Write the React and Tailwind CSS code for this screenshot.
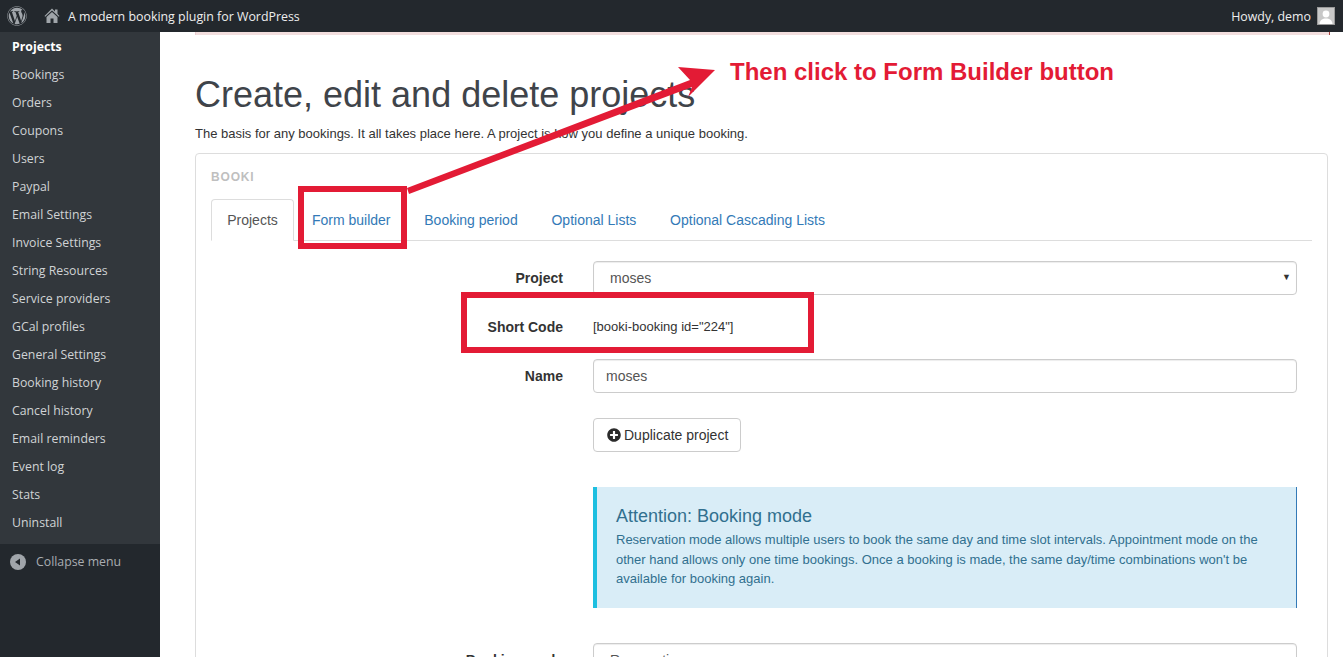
import React from "react";
import { FaWordpress, FaPlusCircle } from "react-icons/fa";

const menu = ["Projects","Bookings","Orders","Coupons","Users","Paypal","Email Settings","Invoice Settings","String Resources","Service providers","GCal profiles","General Settings","Booking history","Cancel history","Email reminders","Event log","Stats","Uninstall"];
const tabs = ["Form builder","Booking period","Optional Lists","Optional Cascading Lists"];

function Row({ label, children, className = "" }) {
  return (
    <div className={`flex ${className}`}>
      <div className="w-[382px] shrink-0 pr-[30px] text-right font-bold text-[14px] leading-[34px] text-[#333]">{label}</div>
      <div className="w-[704px] shrink-0">{children}</div>
    </div>
  );
}

export default function App() {
  return (
    <div className="relative w-[1343px] h-[657px] overflow-hidden bg-white font-['Liberation_Sans',Arial,sans-serif] text-[14px] text-[#333]">
      <header className="h-8 bg-[#23282d] flex items-center text-[#eee] font-['Open_Sans',sans-serif] text-[12.4px] leading-[20px]">
        <FaWordpress className="ml-[7px] w-[20px] h-[20px] text-[#a0a5aa]" />
        <svg viewBox="0 0 20 20" className="ml-[15px] w-[20px] h-[20px] text-[#a0a5aa]" fill="currentColor">
          <path d="M16 8.500 L17.500 10 L16.800 10.700 L10 4.500 L3.200 10.700 L2.500 10 L10 2.500 L13 5.500 V3.500 H15.500 V7.800 Z" />
          <path d="M4.500 11 L10 6 L15.500 11 V17 H11.500 V12.500 H8.500 V17 H4.500 Z" />
        </svg>
        <span className="ml-[6px] pt-[2px]">A modern booking plugin for WordPress</span>
        <span className="ml-auto mr-[6px] pt-[2px]">Howdy, demo</span>
        <div className="w-[18px] h-[18px] mr-[8px] bg-[#c8c8c8] border border-[#9a9a9a] overflow-hidden">
          <svg viewBox="0 0 16 16" className="w-full h-full"><circle cx="8" cy="6" r="3.4" fill="#fff"/><path d="M1.5 16c.4-4 3-5.5 6.5-5.5s6.100 1.500 6.500 5.500z" fill="#fff"/></svg>
        </div>
      </header>
      <div className="flex h-[625px]">
        <aside className="w-40 shrink-0 bg-[#23282d] font-['Open_Sans',sans-serif] text-[12.3px]">
          <nav className="bg-[#32373c] pb-2">
            {menu.map((m, i) => (
              <div key={m} className={`h-7 pl-3 leading-[30px] ${i === 0 ? "font-bold text-white" : "text-[#d0d3d5]"}`}>{m}</div>
            ))}
          </nav>
          <div className="flex items-center h-[36px] pl-[10px] text-[#a9adb1]">
            <svg viewBox="0 0 16 16" className="w-[16px] h-[16px]"><circle cx="8" cy="8" r="8" fill="#a0a5aa"/><path d="M10 4.500v7L5 8z" fill="#23282d"/></svg>
            <span className="ml-[10px]">Collapse menu</span>
          </div>
        </aside>
        <main className="flex-1 min-w-0 pl-[35px] pr-[15px]">
          <div className="h-[3px] w-[1135px] bg-[#f2dede] border-l border-r border-l-[#ebccd1] border-r-[#a94442]" />
          <h1 className="mt-[40px] text-[36px] leading-[40px] font-normal text-[#3f444a]">Create, edit and delete projects</h1>
          <p className="mt-[9px] text-[13px] leading-[20px] text-[#333]">The basis for any bookings. It all takes place here. A project is how you define a unique booking.</p>
          <section className="mt-[9px] w-[1133px] border border-[#ddd] rounded-[4px] pl-[15px] pr-[15px] pt-[16px] h-[600px]">
            <div className="text-[12px] leading-[14px] font-bold tracking-[0.07em] text-[#bfbfbf]">BOOKI</div>
            <div className="mt-[15px] flex h-[42px] border-b border-[#ddd] w-[1101px]">
              <div className="w-[83px] h-[42px] border border-[#ddd] border-b-white rounded-t-[4px] bg-white text-center leading-[41px] text-[#555]">Projects</div>
              {tabs.map((t) => (
                <div key={t} className="ml-[2px] px-[15.9px] leading-[42px] text-[#337ab7] whitespace-nowrap">{t}</div>
              ))}
            </div>
            <Row label="Project" className="mt-[20px]">
              <div className="h-[34px] border border-[#ccc] rounded-[4px] flex items-center pl-[16px] pr-[5px] text-[#555] shadow-[inset_0_1px_1px_rgba(0,0,0,0.075)]">
                moses
                <span className="ml-auto text-[9px] text-[#333]">▼</span>
              </div>
            </Row>
            <Row label="Short Code" className="mt-[15px]">
              <div className="text-[13px] leading-[34px] text-[#333]">[booki-booking id="224"]</div>
            </Row>
            <Row label="Name" className="mt-[15px]">
              <div className="h-[34px] border border-[#ccc] rounded-[4px] flex items-center pl-[12px] text-[#555] shadow-[inset_0_1px_1px_rgba(0,0,0,0.075)]">moses</div>
            </Row>
            <Row label="" className="mt-[25px]">
              <div className="inline-flex items-center h-[34px] w-[148px] border border-[#ccc] rounded-[4px] pl-[13px] text-[#333]">
                <FaPlusCircle className="w-[14px] h-[14px] text-[#2b2b2b]" />
                <span className="ml-[3px]">Duplicate project</span>
              </div>
            </Row>
            <Row label="" className="mt-[35px]">
              <div className="h-[121px] bg-[#d9edf7] border-l-[4px] border-l-[#1dbfe0] border-r border-r-[#337ab7] pl-[19px] pr-[20px] pt-[19px] text-[#31708f]">
                <div className="text-[18px] leading-[20px]">Attention: Booking mode</div>
                <p className="mt-[4px] text-[13px] leading-[19.5px]">Reservation mode allows multiple users to book the same day and time slot intervals. Appointment mode on the other hand allows only one time bookings. Once a booking is made, the same day/time combinations won't be available for booking again.</p>
              </div>
            </Row>
            <Row label="Booking mode" className="mt-[35px]">
              <div className="h-[34px] border border-[#ccc] rounded-[4px] pl-[16px] leading-[32px] text-[#555] shadow-[inset_0_1px_1px_rgba(0,0,0,0.075)]">Reservation</div>
            </Row>
          </section>
        </main>
      </div>

      {/* annotations lying over the page */}
      <svg className="absolute left-0 top-0 pointer-events-none" width="1343" height="657">
        <polygon points="407,188 690,80 678,67 715,70 688,97 692,87 409,194" fill="#e31b35" />
      </svg>
      <div className="absolute left-[298px] top-[186px] w-[109px] h-[63px] border-[6px] border-[#e31b35]" />
      <div className="absolute left-[461px] top-[292px] w-[353px] h-[61px] border-[6px] border-[#e31b35]" />
      <div className="absolute left-[730px] top-[58px] text-[24px] leading-[28px] font-bold text-[#e31b35] whitespace-nowrap">Then click to Form Builder button</div>
    </div>
  );
}
